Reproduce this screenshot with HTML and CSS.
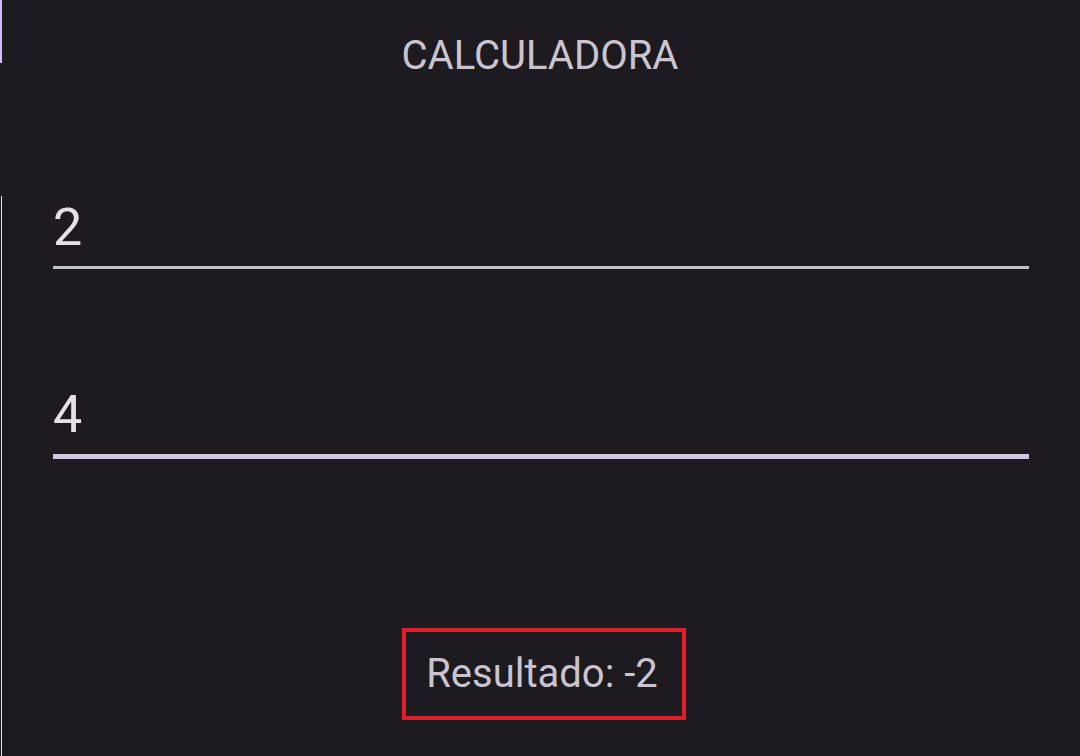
FILE: index.html
```html
<!DOCTYPE html>
<html lang="es">
<head>
<meta charset="utf-8">
<title>Calculadora</title>
<link rel="stylesheet" href="styles.css">
</head>
<body>
<div class="app">
  <span class="accent"></span>
  <header class="topbar">
    <h1 class="title">CALCULADORA</h1>
  </header>
  <main class="content">
    <div class="field field-first">
      <div class="value">2</div>
      <div class="line"></div>
    </div>
    <div class="field field-focused">
      <div class="value">4</div>
      <div class="line"></div>
    </div>
    <div class="result-wrap">
      <div class="result">Resultado: -2</div>
    </div>
  </main>
</div>
</body>
</html>
```
FILE: styles.css
```css
html, body {
  margin: 0;
  padding: 0;
  background: #1d1b20;
}
body {
  font-family: Roboto, "Noto Sans", sans-serif;
  width: 1080px;
  height: 756px;
  overflow: hidden;
}
.app {
  position: relative;
  display: flex;
  flex-direction: column;
  height: 756px;
}
.accent {
  position: absolute;
  left: 0;
  top: 0;
  width: 2px;
  height: 63px;
  background: #cfbcff;
}
.topbar {
  height: 196px;
  box-sizing: border-box;
  padding-top: 32px;
  display: flex;
  justify-content: center;
}
.title {
  margin: 0;
  font-size: 40px;
  line-height: 47px;
  font-weight: 400;
  color: #cac4d0;
}
.content {
  flex: 1;
  margin-left: 1px;
  border-left: 1px solid #e6e0e9;
  padding: 1px 51px 0 51px;
  display: flex;
  flex-direction: column;
}
.value {
  font-size: 52px;
  line-height: 61px;
  color: #e6e0e9;
}
.line {
  margin-top: 8px;
  height: 3px;
  background: #c4c0c8;
}
.field-focused {
  margin-top: 115px;
}
.field-focused .line {
  margin-top: 9px;
  height: 5px;
  background: #d0c8e0;
}
.result-wrap {
  margin-top: 169px;
  padding-left: 6px;
  display: flex;
  justify-content: center;
}
.result {
  border: 4px solid #e31e2a;
  padding: 18px 24px 19px 20px;
  font-size: 40px;
  line-height: 47px;
  color: #cac4d0;
}
```
